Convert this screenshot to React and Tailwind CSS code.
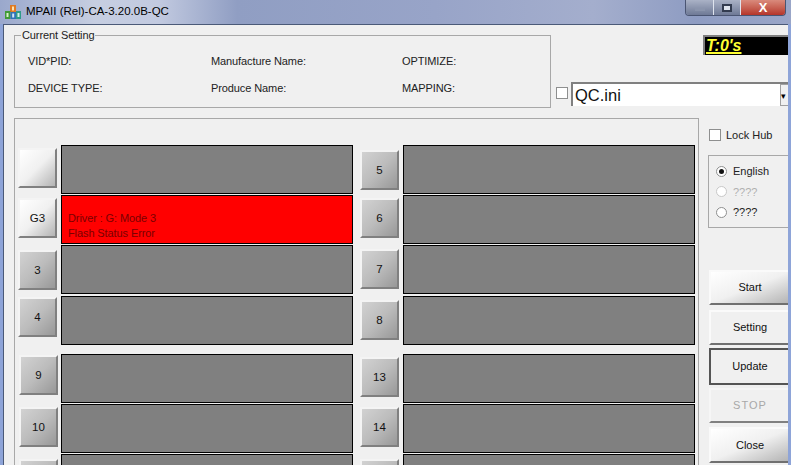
const font = "font-['Liberation_Sans',Arial,sans-serif]";

function SlotButton({ label, active, className }) {
  const face = active
    ? "bg-gradient-to-br from-[#ffffff] via-[#f0f0f0] to-[#b4b4b4]"
    : "bg-gradient-to-br from-[#d2d2d2] via-[#bcbcbc] to-[#989898]";
  return (
    <div
      className={`w-[39px] h-[40px] shrink-0 flex items-center justify-center pt-[1px] text-[11.5px] text-[#111] border-2 border-t-[#f4f4f4] border-l-[#f4f4f4] border-r-[#808080] border-b-[#808080] ${face} ${className}`}
    >
      {label}
    </div>
  );
}

function Slot({ red, children, className = "" }) {
  return (
    <div
      className={`w-[292px] h-[49px] shrink-0 border border-black pl-[6px] flex flex-col justify-end pb-[2px] text-[11px] tracking-[-0.1px] leading-[15px] text-[#7a0000] ${red ? "bg-[#ff0000]" : "bg-[#808080]"} ${className}`}
    >
      {children}
    </div>
  );
}

function Row({ label, active, btnTop, btnLeft, red, children, rowTop }) {
  return (
    <div className={`flex items-start ${rowTop}`}>
      <div className={`w-[43px] shrink-0 ${btnLeft}`}>
        <SlotButton label={label} active={active} className={btnTop} />
      </div>
      <Slot red={red}>{children}</Slot>
    </div>
  );
}

function SideButton({ label, tall, focused, disabled, hi, className }) {
  return (
    <div
      className={`w-[82px] flex items-center justify-center text-[11px] ${tall} ${className} ${
        focused
          ? "border-2 border-[#555] bg-[#f0f0f0] text-[#111]"
          : disabled
          ? "border-2 border-t-[#f6f6f6] border-l-[#f6f6f6] border-r-[#f0f0f0] border-b-[#808080] bg-[#f0f0f0] text-[#a8a8a8] tracking-[1px]"
          : `border-2 border-t-[#fafafa] border-l-[#fafafa] border-r-[#909090] border-b-[#707070] text-[#111] ${
              hi ? "bg-gradient-to-br from-[#ffffff] via-[#f0f0f0] to-[#b4b4b4]" : "bg-[#f0f0f0]"
            }`
      }`}
    >
      {label}
    </div>
  );
}

function Check({ className }) {
  return <span className={`block w-[12px] h-[12px] bg-white border border-[#8e8f8f] shrink-0 ${className}`} />;
}

function Radio({ on, dim }) {
  return (
    <span className={`w-[11px] h-[11px] rounded-full border flex items-center justify-center shrink-0 bg-white ${dim ? "border-[#c8c8c8]" : "border-[#8e8f8f]"}`}>
      {on && <span className="w-[5px] h-[5px] rounded-full bg-[#111]" />}
    </span>
  );
}

function AppIcon() {
  return (
    <svg width="18" height="18" viewBox="0 0 18 18" className="shrink-0">
      <rect x="6" y="2" width="6" height="7" fill="#e07b24" />
      <rect x="8" y="3.5" width="2" height="4" fill="#fbe3b0" />
      <rect x="1" y="8" width="5.5" height="8" fill="#3f9a35" />
      <rect x="6.5" y="9" width="5.5" height="7" fill="#2f72b8" />
      <rect x="12" y="8" width="5" height="8" fill="#2f9c88" />
      <rect x="2.5" y="10" width="2" height="4" fill="#d8efc8" />
      <rect x="8.2" y="10.5" width="2" height="4" fill="#d2e6f6" />
      <rect x="13.5" y="10" width="2" height="4" fill="#d2f0e8" />
    </svg>
  );
}

export default function App() {
  return (
    <div className={`w-[791px] h-[465px] overflow-hidden bg-[#8ea4d8] flex flex-col ${font}`}>
      <div className="h-[24px] shrink-0 flex items-start bg-[linear-gradient(90deg,#9aa8cc_0%,#c6cee1_12%,#c2cae0_20%,#909ec3_30%,#98a4c8_55%,#a4aecd_75%,#8e9cc2_88%,#9aa6c8_100%)]">
        <div className="pl-[4px] pt-[3px]">
          <AppIcon />
        </div>
        <div className="pl-[4px] pt-[4px] text-[11.5px] leading-[14px] text-black">MPAII (Rel)-CA-3.20.0B-QC</div>
        <div className="ml-auto mr-[5px] flex h-[16px] border border-t-0 border-[#4a5572] rounded-b-[4px] overflow-hidden">
          <div className="w-[28px] flex items-center justify-center bg-gradient-to-b from-[#aab2c6] to-[#6f7a96] border-r border-[#dfe4ee]">
            <span className="block w-[10px] h-[3px] bg-[#8a94ac] mt-[3px]" />
          </div>
          <div className="w-[27px] flex items-center justify-center bg-gradient-to-b from-[#aab2c6] to-[#6f7a96] border-r border-[#dfe4ee]">
            <span className="block w-[10px] h-[8px] border-2 border-[#333c50] bg-[#dfe4ee]" />
          </div>
          <div className="w-[44px] flex items-center justify-center bg-gradient-to-b from-[#d98a7c] to-[#b5342a] text-white text-[13px] font-bold leading-none">
            X
          </div>
        </div>
      </div>

      <div className="ml-[3px] w-[785px] flex-1 min-h-0 overflow-hidden bg-[#f0f0f0] border-t border-l border-[#4b5a78] text-[#222]">
        <div className="flex h-[93px]">
          <fieldset className="ml-[10px] mt-[3px] w-[537px] h-[80px] border border-[#a8a8a8] pl-[13px] text-[11px] tracking-[-0.1px]">
            <legend className="ml-[-7px] px-[1px] text-[11px] leading-[14px]">Current Setting</legend>
            <div className="grid grid-cols-[183px_191px_1fr] gap-y-[13px] mt-[12px] leading-[14px]">
              <span>VID*PID:</span>
              <span>Manufacture Name:</span>
              <span>OPTIMIZE:</span>
              <span>DEVICE TYPE:</span>
              <span>Produce Name:</span>
              <span>MAPPING:</span>
            </div>
          </fieldset>
          <div className="ml-[5px] flex-1 min-w-0 flex flex-col">
            <div className="mt-[10px] ml-[147px] h-[20px] w-[85px] bg-black border-t-2 border-l-2 border-[#808080] pl-[1px] text-[16px] leading-[17px] font-bold italic text-[#ffff33]">
              <span className="underline decoration-2">T:0's</span>
            </div>
            <div className="mt-[27px] flex items-start">
              <Check className="mt-[5px]" />
              <div className="ml-[3px] w-[217px] h-[24px] bg-white border-t-2 border-l-2 border-[#808080] pl-[2px] text-[16.5px] leading-[22px] text-[#111] flex justify-between">
                QC.ini
                <span className="w-[8px] bg-[#f0f0f0] border border-[#a0a0a0] border-r-0 text-[9px] leading-[22px] text-black">▾</span>
              </div>
            </div>
          </div>
        </div>

        <div className="flex">
          <div className="ml-[10px] w-[685px] h-[360px] shrink-0 border border-[#a8a8a8] border-b-0 pl-[3px] pt-[26px]">
            <div className="flex">
              <div>
                <Row label="" active btnTop="mt-[3px]"><></></Row>
                <Row label="G3" active btnTop="mt-[3px]" rowTop="mt-[1px]" red>
                  <span>Driver : G: Mode 3</span>
                  <span>Flash Status Error</span>
                </Row>
                <Row label="3" btnTop="mt-[5px]" rowTop="mt-[1px]" />
                <Row label="4" btnTop="mt-[1px]" rowTop="mt-[2px]" />
                <Row label="9" btnTop="mt-[1px]" btnLeft="pl-[1px]" rowTop="mt-[9px]" />
                <Row label="10" btnTop="mt-[3px]" btnLeft="pl-[1px]" rowTop="mt-[1px]" />
                <Row label="" btnTop="mt-[5px]" btnLeft="pl-[1px]" rowTop="mt-[1px]" />
              </div>
              <div className="ml-[7px]">
                <Row label="5" btnTop="mt-[5px]" />
                <Row label="6" btnTop="mt-[3px]" rowTop="mt-[1px]" />
                <Row label="7" btnTop="mt-[4px]" rowTop="mt-[1px]" />
                <Row label="8" btnTop="mt-[4px]" rowTop="mt-[2px]" />
                <Row label="13" btnTop="mt-[3px]" rowTop="mt-[9px]" />
                <Row label="14" btnTop="mt-[3px]" rowTop="mt-[1px]" />
                <Row label="" btnTop="mt-[5px]" rowTop="mt-[1px]" />
              </div>
            </div>
          </div>

          <div className="ml-[10px] flex-1 min-w-0 text-[11px]">
            <div className="mt-[10px] flex items-center">
              <Check className="" />
              <span className="ml-[5px] leading-[14px]">Lock Hub</span>
            </div>
            <div className="mt-[13px] -ml-[1px] w-[90px] h-[73px] border border-[#a8a8a8] pl-[7px] pt-[8px] flex flex-col gap-[6.5px] leading-[14px]">
              <div className="flex items-center gap-[6px]"><Radio on /><span>English</span></div>
              <div className="flex items-center gap-[6px] text-[#b0b0b0]"><Radio dim /><span>????</span></div>
              <div className="flex items-center gap-[6px]"><Radio /><span>????</span></div>
            </div>
            <div className="mt-[42px] flex flex-col">
              <SideButton label="Start" tall="h-[35px]" hi />
              <SideButton label="Setting" tall="h-[35px]" className="mt-[5px]" />
              <SideButton label="Update" tall="h-[37px]" focused className="mt-[3px]" />
              <SideButton label="STOP" tall="h-[35px]" disabled className="mt-[3px]" />
              <SideButton label="Close" tall="h-[36px]" hi className="mt-[4px]" />
            </div>
          </div>
        </div>
      </div>
    </div>
  );
}
